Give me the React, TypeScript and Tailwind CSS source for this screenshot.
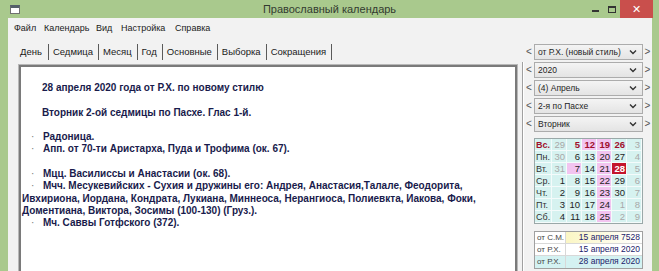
import React from "react";

const F = "font-['Liberation_Sans',Arial,sans-serif]";

function Chevron() {
  return (
    <svg width="8" height="6" viewBox="0 0 8 6" className="shrink-0">
      <path d="M1 1.5 L4 4.5 L7 1.5" fill="none" stroke="#333" strokeWidth="1.4" />
    </svg>
  );
}

function SelectRow({ text }: { text: string }) {
  return (
    <div className="flex items-center h-[16px] mb-[2px]">
      <span className="w-[10px] text-center text-[10px] leading-none text-[#555]">&lt;</span>
      <div className="w-[109px] h-[16px] border border-[#acacac] bg-gradient-to-b from-[#f4f4f4] to-[#e4e4e4] flex items-center pl-[3px] pr-[5px]">
        <span className="flex-1 text-[8.5px] leading-none text-[#1e1e1e] whitespace-nowrap">{text}</span>
        <Chevron />
      </div>
      <span className="w-[9px] text-center text-[10px] leading-none text-[#555]">&gt;</span>
    </div>
  );
}

type Cell = { t: string; c?: "g" | "sun"; bg?: "p" | "red" };

const rows: { label: string; sun?: boolean; cells: Cell[] }[] = [
  {
    label: "Вс.",
    sun: true,
    cells: [
      { t: "29", c: "g" },
      { t: "5", c: "sun" },
      { t: "12", c: "sun", bg: "p" },
      { t: "19", c: "sun", bg: "p" },
      { t: "26", c: "sun" },
      { t: "3", c: "g" },
    ],
  },
  { label: "Пн.", cells: [{ t: "30", c: "g" }, { t: "6" }, { t: "13" }, { t: "20", bg: "p" }, { t: "27" }, { t: "4", c: "g" }] },
  { label: "Вт.", cells: [{ t: "31", c: "g" }, { t: "7", bg: "p" }, { t: "14" }, { t: "21", bg: "p" }, { t: "28", bg: "red" }, { t: "5", c: "g" }] },
  { label: "Ср.", cells: [{ t: "1" }, { t: "8" }, { t: "15" }, { t: "22", bg: "p" }, { t: "29" }, { t: "6", c: "g" }] },
  { label: "Чт.", cells: [{ t: "2" }, { t: "9" }, { t: "16" }, { t: "23", bg: "p" }, { t: "30" }, { t: "7", c: "g" }] },
  { label: "Пт.", cells: [{ t: "3" }, { t: "10" }, { t: "17" }, { t: "24", bg: "p" }, { t: "1", c: "g" }, { t: "8", c: "g" }] },
  { label: "Сб.", cells: [{ t: "4" }, { t: "11" }, { t: "18" }, { t: "25", bg: "p" }, { t: "2", c: "g" }, { t: "9", c: "g" }] },
];

function CalCell({ cell }: { cell: Cell }) {
  let cls = "h-[12px] leading-[12px] text-right pr-[1px] text-[9.5px] border-r border-b border-[#f4fbfb] ";
  if (cell.bg === "red") cls += "bg-[#c4142c] text-white font-bold ";
  else if (cell.bg === "p") cls += "bg-[#f2c4f0] ";
  else cls += "bg-[#d6f2f0] ";
  if (cell.bg !== "red") {
    if (cell.c === "g") cls += "text-[#a8a8a8] ";
    else if (cell.c === "sun") cls += "text-[#a0102c] font-bold ";
    else cls += "text-[#1e1e1e] ";
  }
  return <div className={cls}>{cell.t}</div>;
}

function Line({ children, indent }: { children?: React.ReactNode; indent?: "top" | "bullet" | "none" }) {
  if (indent === "bullet") {
    return (
      <div className="h-[12.3px] leading-[12.3px] whitespace-nowrap flex">
        <span className="w-[21px] pl-[9px] text-[#777] font-normal">·</span>
        <span>{children}</span>
      </div>
    );
  }
  return (
    <div className={`h-[12.3px] leading-[12.3px] whitespace-nowrap ${indent === "top" ? "pl-[20px]" : ""}`}>
      {children}
    </div>
  );
}

function DateRow({ label, value, last, tone }: { label: string; value: string; last?: boolean; tone: "y" | "w" | "c" }) {
  const valBg =
    tone === "y" ? "bg-gradient-to-r from-[#fbf6c4] to-white" : tone === "w" ? "bg-white" : "bg-[#d4f2f2]";
  const labBg = tone === "c" ? "bg-[#d4f2f2]" : "bg-white";
  return (
    <div className={`flex h-[12px] ${last ? "" : "border-b border-[#d8d8d8]"}`}>
      <div className={`w-[31px] shrink-0 pl-[2px] ${labBg} text-[8px] text-[#444] border-r border-[#d8d8d8] leading-[11px] whitespace-nowrap`}>
        {label}
      </div>
      <div className={`flex-1 text-right pr-[2px] ${valBg} text-[#22226a] leading-[11px] whitespace-nowrap`}>{value}</div>
    </div>
  );
}

export default function App() {
  return (
    <div className={`w-[659px] h-[271px] overflow-hidden bg-[#a9c98d] flex flex-col ${F}`}>
      {/* title bar */}
      <div className="h-[18px] shrink-0 grid grid-cols-[1fr_auto_1fr] items-center">
        <div className="pl-[10px] flex items-center">
          <div className="w-[10px] h-[9px] bg-white border border-[#707070] border-t-[3px] border-t-[#55606a]" />
        </div>
        <div className="text-[11px] leading-none text-[#333b30] whitespace-nowrap">Православный календарь</div>
        <div className="flex justify-end items-start h-full pr-[6px]">
          <div className="w-[18px] h-[18px] flex items-center justify-center">
            <div className="w-[7px] h-[2px] bg-[#333] mt-[3px]" />
          </div>
          <div className="w-[16px] h-[18px] flex items-center justify-center">
            <div className="w-[8px] h-[7px] border border-[#333] border-t-2" />
          </div>
          <div className="w-[33px] h-[18px] bg-[#c94f4c] flex items-center justify-center text-white text-[11px] leading-none">✕</div>
        </div>
      </div>

      {/* body */}
      <div className="flex-1 min-h-0 flex pl-[8px] pr-[7px]">
        <div className="flex-1 bg-[#f2f2f2] flex flex-col min-w-0">
          {/* menu */}
          <div className="h-[22px] shrink-0 flex items-center pl-[6px] text-[9px] text-[#1a1a1a]">
            <span className="w-[30px] shrink-0">Файл</span>
            <span className="w-[52px] shrink-0">Календарь</span>
            <span className="w-[25px] shrink-0">Вид</span>
            <span className="w-[54px] shrink-0">Настройка</span>
            <span className="shrink-0">Справка</span>
          </div>

          <div className="flex-1 min-h-0 flex">
            {/* left column */}
            <div className="w-[514px] shrink-0 pl-[10px] flex flex-col">
              <div className="mt-[2px] h-[20px] shrink-0 flex items-center pl-[2px] text-[9.5px] text-[#1a1a1a]">
                {["День", "Седмица", "Месяц", "Год", "Основные", "Выборка", "Сокращения"].map((t, i) => (
                  <div key={t} className="flex items-center h-[16px]">
                    <span className={i === 0 ? "pr-[6px]" : "pl-[4px] pr-[5px]"}>{t}</span>
                    <div className="w-px h-[16px] bg-[#5a5a5a]" />
                  </div>
                ))}
              </div>
              <div className="mt-[2px] w-[500px] flex-1 min-h-0 border-t border-l border-r border-[#b8b8b8]">
                <div className="h-full bg-white border-t-2 border-l-2 border-r-2 border-[#7a7a7a] pl-[1px] pt-[15px] text-[10px] font-bold text-[#191b4c] flex flex-col">
                  <Line indent="top">28 апреля 2020 года от Р.Х. по новому стилю</Line>
                  <Line />
                  <Line indent="top">Вторник 2-ой седмицы по Пасхе. Глас 1-й.</Line>
                  <Line />
                  <Line indent="bullet">Радоница.</Line>
                  <Line indent="bullet">Апп. от 70-ти Аристарха, Пуда и Трофима (ок. 67).</Line>
                  <Line />
                  <Line indent="bullet">Мцц. Василиссы и Анастасии (ок. 68).</Line>
                  <Line indent="bullet">Мчч. Месукевийских - Сухия и дружины его: Андрея, Анастасия,Талале, Феодорита,</Line>
                  <Line>Ивхириона, Иордана, Кондрата, Лукиана, Миннеоса, Нерангиоса, Полиевкта, Иакова, Фоки,</Line>
                  <Line>Доментиана, Виктора, Зосимы (100-130) (Груз.).</Line>
                  <Line indent="bullet">Мч. Саввы Готфского (372).</Line>
                </div>
              </div>
            </div>

            {/* right column */}
            <div className="flex-1 flex">
              <div className="mt-[22px] w-[2px] border-l border-r border-l-[#a0a0a0] border-r-white" />
              <div className="flex-1 flex flex-col pt-[4px]">
                <SelectRow text="от Р.Х. (новый стиль)" />
                <SelectRow text="2020" />
                <SelectRow text="(4) Апрель" />
                <SelectRow text="2-я по Пасхе" />
                <SelectRow text="Вторник" />

                {/* calendar */}
                <div className="ml-[10px] mt-[4px] w-[109px] border border-[#9aa8a8] grid grid-cols-[17px_repeat(6,15px)]">
                  {rows.map((r) => (
                    <React.Fragment key={r.label}>
                      <div
                        className={`h-[12px] leading-[12px] pl-[1px] text-[9px] bg-[#d6f2f0] border-r border-b border-[#f4fbfb] ${
                          r.sun ? "text-[#a0102c] font-bold" : "text-[#333]"
                        }`}
                      >
                        {r.label}
                      </div>
                      {r.cells.map((c, i) => (
                        <CalCell key={i} cell={c} />
                      ))}
                    </React.Fragment>
                  ))}
                </div>

                {/* dates */}
                <div className="ml-[10px] mt-[7px] w-[109px] border border-[#a0a0a0] text-[8.5px]">
                  <DateRow label="от С.М." value="15 апреля 7528" tone="y" />
                  <DateRow label="от Р.Х." value="15 апреля 2020" tone="w" />
                  <DateRow label="от Р.Х." value="28 апреля 2020" tone="c" last />
                </div>
              </div>
            </div>
          </div>
        </div>
      </div>
    </div>
  );
}
